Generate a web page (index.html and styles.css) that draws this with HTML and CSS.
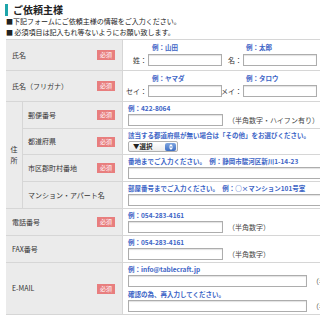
FILE: index.html
```html
<!DOCTYPE html>
<html lang="ja">
<head>
    <meta charset="UTF-8">
    <meta name="viewport" content="width=device-width, initial-scale=1.0">
    <title>ご依頼主様</title>
    <link rel="stylesheet" href="styles.css">
</head>
<body>
    <h2 class="title">ご依頼主様</h2>
    <div class="notes">
        <p>■下記フォームにご依頼主様の情報をご入力ください。</p>
        <p>■ 必須項目は記入もれ等ないようにお願い致します。</p>
    </div>

    <table class="form">
        <tr>
            <th colspan="2"><div class="label">氏名<span class="req">必須</span></div></th>
            <td>
                <div class="name-grid">
                    <span class="ex c2">例：山田</span>
                    <span class="ex c4">例：太郎</span>
                    <span class="nl">姓：</span><input type="text">
                    <span class="nl">名：</span><input type="text">
                </div>
            </td>
        </tr>
        <tr>
            <th colspan="2"><div class="label">氏名（フリガナ）<span class="req">必須</span></div></th>
            <td>
                <div class="name-grid">
                    <span class="ex c2">例：ヤマダ</span>
                    <span class="ex c4">例：タロウ</span>
                    <span class="nl">セイ：</span><input type="text">
                    <span class="nl">メイ：</span><input type="text">
                </div>
            </td>
        </tr>
        <tr>
            <th class="group" rowspan="4">住<br>所</th>
            <th class="sub"><div class="label">郵便番号<span class="req">必須</span></div></th>
            <td>
                <span class="ex">例：422-8064</span>
                <div class="field"><input type="text" class="w-s"><span class="hint">（半角数字・ハイフン有り）</span></div>
            </td>
        </tr>
        <tr>
            <th class="sub"><div class="label">都道府県<span class="req">必須</span></div></th>
            <td>
                <span class="ex">該当する都道府県が無い場合は「その他」をお選びください。</span>
                <div class="select">▼選択
                    <span class="arrows">
                        <svg width="6" height="8" viewBox="0 0 6 8"><path d="M3 1 5.2 3.4H.8zM3 7 .8 4.6h4.4z" fill="#fff"/></svg>
                    </span>
                </div>
            </td>
        </tr>
        <tr>
            <th class="sub"><div class="label">市区郡町村番地<span class="req">必須</span></div></th>
            <td>
                <span class="ex">番地までご入力ください。　例：静岡市駿河区新川1-14-23</span>
                <input type="text" class="w-l">
            </td>
        </tr>
        <tr>
            <th class="sub"><div class="label">マンション・アパート名</div></th>
            <td>
                <span class="ex">部屋番号までご入力ください。　例：○×マンション101号室</span>
                <input type="text" class="w-l">
            </td>
        </tr>
        <tr>
            <th colspan="2"><div class="label">電話番号<span class="req">必須</span></div></th>
            <td>
                <span class="ex">例：054-283-4161</span>
                <div class="field"><input type="text" class="w-s"><span class="hint">（半角数字）</span></div>
            </td>
        </tr>
        <tr>
            <th colspan="2"><div class="label">FAX番号</div></th>
            <td>
                <span class="ex">例：054-283-4161</span>
                <div class="field"><input type="text" class="w-s"><span class="hint">（半角数字）</span></div>
            </td>
        </tr>
        <tr>
            <th colspan="2"><div class="label">E-MAIL<span class="req">必須</span></div></th>
            <td>
                <span class="ex">例：info@tablecraft.jp</span>
                <div class="field"><input type="text" class="w-m"><span class="hint">（半角英数字）</span></div>
                <span class="ex again">確認の為、再入力してください。</span>
                <div class="field"><input type="text" class="w-m"><span class="hint">（半角英数字）</span></div>
            </td>
        </tr>
    </table>
</body>
</html>
```

FILE: styles.css
```css
html {
    overflow: hidden;
}
body {
    margin: 0;
    padding: 4px 0 0 6px;
    font-family: "Noto Sans CJK JP", "Noto Sans", sans-serif;
    font-size: 7px;
    line-height: 9px;
    color: #333;
    overflow: hidden;
    width: 460px;
}
.title {
    margin: 0 0 0 -1px;
    padding-left: 5px;
    border-left: 3px solid #1ea5aa;
    font-size: 10px;
    line-height: 12px;
    font-weight: bold;
    color: #222;
}
.notes {
    margin-bottom: 1px;
}
.notes p {
    margin: 0;
    line-height: 11px;
    color: #222;
}
.form {
    border-collapse: collapse;
    width: 440px;
    border-top: 1px solid #d6d6d6;
}
.form th {
    background: #ebebeb;
    font-weight: normal;
    text-align: left;
    border-bottom: 1px solid #d6d6d6;
    padding: 0 7px 0 6px;
    width: 102px;
    color: #333;
}
.form th.group {
    width: 16px;
    padding: 0;
    text-align: center;
    line-height: 11px;
}
.form th.sub {
    width: 87px;
    padding-left: 5px;
    border-left: 1px solid #d6d6d6;
}
.form td {
    border-bottom: 1px solid #d6d6d6;
    border-left: 1px solid #d6d6d6;
    padding: 2px 5px 2px;
    vertical-align: top;
}
.label {
    display: flex;
    justify-content: space-between;
    align-items: center;
}
.req {
    background: #e87e7e;
    color: #fff;
    font-size: 6px;
    line-height: 8px;
    padding: 1px 3px;
}
.ex {
    display: block;
    color: #3c64c6;
    font-weight: bold;
    font-size: 6.5px;
    line-height: 9px;
    margin-bottom: 1px;
    white-space: nowrap;
}
.ex.again {
    margin-top: 3px;
}
input {
    box-sizing: border-box;
    display: block;
    height: 12px;
    margin: 0;
    padding: 0;
    border: 1px solid #adadad;
    box-shadow: inset 0 1px 1px #e2e2e2;
    background: #fff;
}
.name-grid {
    display: grid;
    grid-template-columns: 20px 74px 21px 74px;
    align-items: center;
    padding: 1px 0 2px;
}
.name-grid .c2 {
    grid-column: 2;
    padding-left: 4px;
}
.name-grid .c4 {
    grid-column: 4;
    padding-left: 3px;
}
.name-grid .ex {
    margin-bottom: 2px;
}
.name-grid input {
    width: 74px;
}
.nl {
    display: flex;
    justify-content: flex-end;
    white-space: nowrap;
    padding-right: 1px;
}
.field {
    display: flex;
    align-items: center;
    gap: 5px;
}
.hint {
    color: #444;
    white-space: nowrap;
}
.w-s {
    width: 95px;
}
.w-m {
    width: 179px;
}
.w-l {
    width: 300px;
}
.select {
    display: flex;
    align-items: center;
    justify-content: space-between;
    box-sizing: border-box;
    width: 50px;
    height: 11px;
    margin-top: 1px;
    padding: 0 1px 0 4px;
    border: 1px solid #b0b0b0;
    border-radius: 2px;
    background: linear-gradient(#fff, #ececec);
    font-weight: bold;
    font-size: 6.5px;
    color: #222;
}
.arrows {
    display: flex;
    align-items: center;
    justify-content: center;
    width: 11px;
    height: 8px;
    border-radius: 2px;
    background: linear-gradient(#7fa6e0, #3f6fc4);
}
```
